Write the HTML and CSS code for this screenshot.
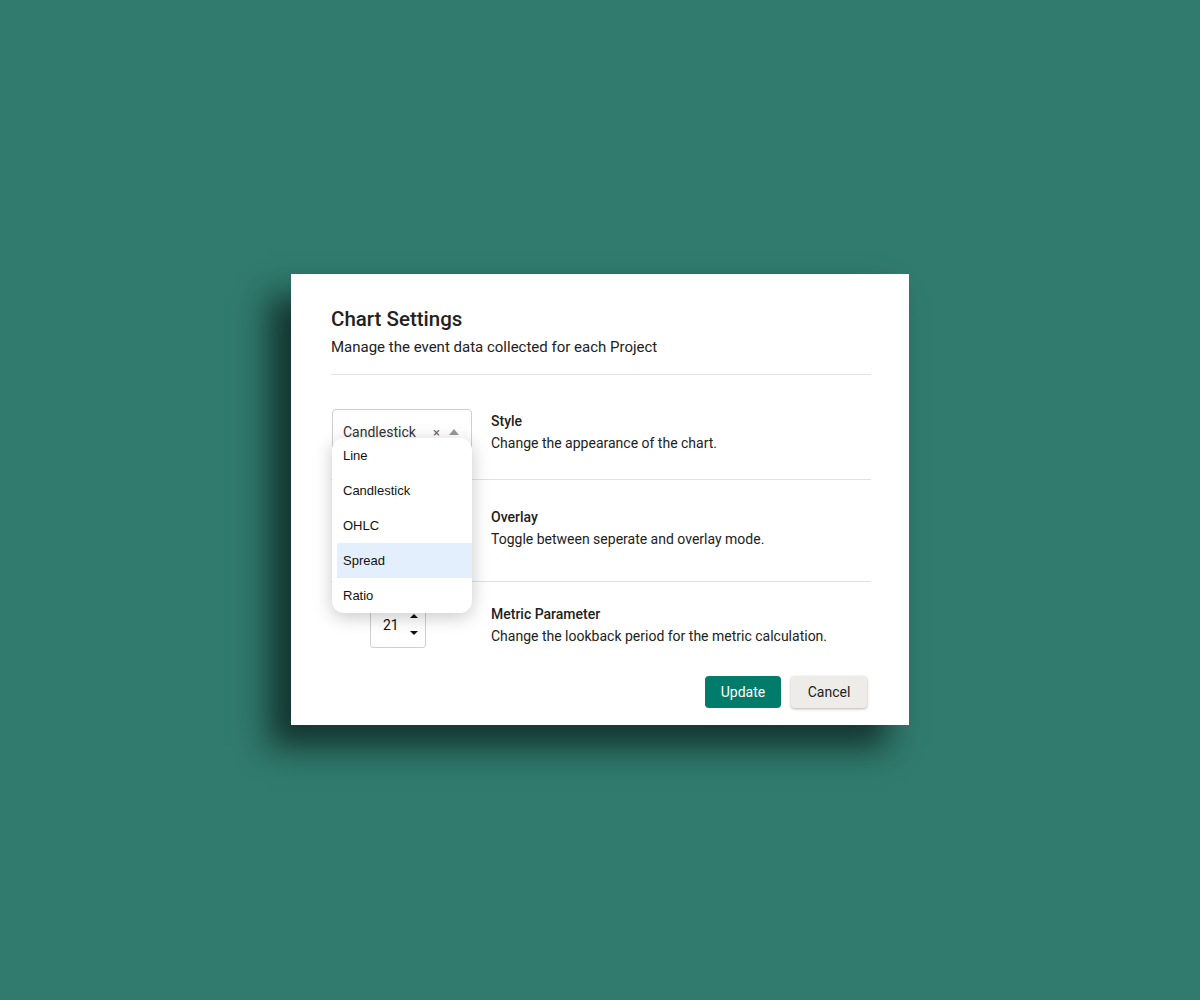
FILE: index.html
```html
<!DOCTYPE html>
<html lang="en">
<head>
  <meta charset="UTF-8" />
  <title>Chart Settings</title>
  <link rel="stylesheet" href="styles.css">
</head>
<body>
  <div class="dialog">
    <div class="header">
      <h2>Chart Settings</h2>
      <p>Manage the event data collected for each Project</p>
    </div>

    <div class="row row-style">
      <div class="control">
        <div class="select">
          <span class="value">Candlestick</span>
          <span class="clear">&times;</span>
          <span class="caret"></span>
          <ul class="menu">
            <li>Line</li>
            <li>Candlestick</li>
            <li>OHLC</li>
            <li class="hover">Spread</li>
            <li>Ratio</li>
          </ul>
        </div>
      </div>
      <div class="info">
        <h3>Style</h3>
        <p>Change the appearance of the chart.</p>
      </div>
    </div>

    <div class="row row-overlay">
      <div class="control">
        <div class="toggle"></div>
      </div>
      <div class="info">
        <h3>Overlay</h3>
        <p>Toggle between seperate and overlay mode.</p>
      </div>
    </div>

    <div class="row row-metric">
      <div class="control">
        <div class="number">
          <span>21</span>
          <div class="spin">
            <span class="up"></span>
            <span class="down"></span>
          </div>
        </div>
      </div>
      <div class="info">
        <h3>Metric Parameter</h3>
        <p>Change the lookback period for the metric calculation.</p>
      </div>
    </div>

    <div class="footer">
      <button class="btn primary">Update</button>
      <button class="btn secondary">Cancel</button>
    </div>
  </div>
</body>
</html>
```

FILE: styles.css
```css
body { margin: 0; min-height: 100vh; background: #317a6e; display: flex; align-items: center; justify-content: center; font-family: Roboto, "Liberation Sans", sans-serif; color: #222; }
.dialog { width: 618px; height: 451px; margin-top: -1px; box-sizing: border-box; background: #fff; padding: 33px 38px 17px 40px; box-shadow: -22px 22px 30px rgba(10, 30, 26, 0.75); }
.header { border-bottom: 1px solid #e2e2e2; padding-bottom: 17px; }
.header h2 { margin: 0; font-size: 20.5px; line-height: 24px; font-weight: 500; color: #222; }
.header p { margin: 6px 0 0; font-size: 15px; line-height: 20px; color: #222; }
.row { display: flex; align-items: center; border-bottom: 1px solid #e2e2e2; }
.row-style { padding: 34px 0 24px; }
.row-overlay { padding: 27px 0 32px; }
.row-metric { padding: 19px 0 12px; border-bottom: none; }
.control { width: 159px; flex: none; display: flex; padding-left: 1px; }
.info h3 { margin: 0; font-size: 14px; line-height: 20px; font-weight: 500; }
.info p { margin: 2px 0 0; font-size: 14px; line-height: 20px; }

.select { position: relative; width: 140px; height: 46px; box-sizing: border-box; border: 1px solid #cfcfcf; border-radius: 4px; display: flex; align-items: center; padding: 0 12px 0 10px; font-size: 14px; color: #333; }
.select .value { flex: 1; }
.select .clear { font-size: 13px; color: #666; margin-right: 9px; }
.select .caret { width: 0; height: 0; border-left: 5px solid transparent; border-right: 5px solid transparent; border-bottom: 6px solid #999; }
.menu { position: absolute; top: 28px; left: -1px; width: 140px; margin: 0; padding: 0 0 0 5px; box-sizing: border-box; list-style: none; background: #fff; border-radius: 12px; box-shadow: 0 4px 18px rgba(0, 0, 0, 0.22); font-family: "Liberation Sans", Arial, sans-serif; font-size: 13px; color: #111; z-index: 2; }
.menu li { height: 35px; line-height: 35px; padding-left: 6px; }
.menu li.hover { background: #e3effd; }

.toggle { width: 36px; height: 20px; border-radius: 10px; background: #ccc; margin-left: 40px; }

.number { margin-left: 38px; width: 56px; height: 47px; box-sizing: border-box; border: 1px solid #cfcfcf; border-radius: 3px; display: flex; align-items: center; padding-left: 12px; font-size: 14px; color: #111; }
.number > span { flex: 1; }
.spin { display: flex; flex-direction: column; gap: 13px; margin-right: 7px; }
.spin span { width: 0; height: 0; border-left: 4px solid transparent; border-right: 4px solid transparent; }
.spin .up { border-bottom: 4px solid #111; }
.spin .down { border-top: 4px solid #111; }

.footer { display: flex; justify-content: flex-end; gap: 10px; margin-top: 16px; padding-right: 4px; }
.btn { width: 76px; height: 32px; border: none; border-radius: 4px; font-family: Roboto, "Liberation Sans", sans-serif; font-size: 14px; cursor: pointer; }
.primary { background: #017c6a; color: #fff; }
.secondary { background: #eeece9; color: #222; box-shadow: 0 1px 3px rgba(0, 0, 0, 0.3); }
```
